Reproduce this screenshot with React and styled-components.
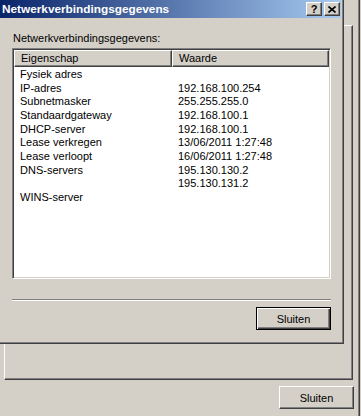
import styled, { createGlobalStyle } from 'styled-components';

const Global = createGlobalStyle`
  html, body {
    margin: 0;
    padding: 0;
    background: #d4d0c8;
    overflow: hidden;
  }
  body {
    font-family: "Liberation Sans", Arial, sans-serif;
    font-size: 11px;
    color: #000;
  }
`;

const Desktop = styled.div`
  position: relative;
  width: 361px;
  height: 416px;
  overflow: hidden;
  background: #d4d0c8;
`;

const StatusWindow = styled.div`
  box-sizing: border-box;
  width: 360px;
  height: 416px;
  padding: 25px 5px 0 4px;
  border-right: 1px solid #404040;
  box-shadow: inset -1px 0 0 #808080;
  display: flex;
  flex-direction: column;
`;

const TabPanel = styled.div`
  box-sizing: border-box;
  width: 349px;
  height: 355px;
  border-top: 1px solid #fff;
  border-left: 1px solid #fff;
  border-right: 1px solid #404040;
  border-bottom: 1px solid #404040;
  box-shadow: inset -1px -1px 0 #808080;
`;

const ButtonRow = styled.div`
  display: flex;
  justify-content: flex-end;
  margin-top: ${(p) => p.$gap}px;
`;

const Button = styled.button`
  box-sizing: border-box;
  width: 75px;
  height: 23px;
  padding: 0;
  background: #d4d0c8;
  font-family: "Liberation Sans", Arial, sans-serif;
  font-size: 11px;
  color: #000;
  border: 1px solid;
  border-color: ${(p) => (p.$default ? '#000' : '#fff #404040 #404040 #fff')};
  box-shadow: ${(p) =>
    p.$default
      ? 'inset 1px 1px 0 #fff, inset -1px -1px 0 #404040, inset -2px -2px 0 #808080'
      : 'inset -1px -1px 0 #808080'};
  outline: none;
`;

const Dialog = styled.div`
  position: absolute;
  left: 0;
  top: 0;
  box-sizing: border-box;
  width: 344px;
  height: 344px;
  background: #d4d0c8;
  border-right: 1px solid #404040;
  border-bottom: 1px solid #404040;
  box-shadow: inset -1px -1px 0 #808080;
  display: flex;
  flex-direction: column;
`;

const TitleBar = styled.div`
  box-sizing: border-box;
  width: 341px;
  height: 18px;
  padding: 0 1px 0 2px;
  display: flex;
  align-items: center;
  background: linear-gradient(to right, #0a246a, #a6caf0);
`;

const Title = styled.span`
  flex: 1;
  color: #fff;
  font-weight: bold;
  font-size: 11.8px;
  white-space: nowrap;
`;

const CaptionButton = styled.div`
  box-sizing: border-box;
  width: 16px;
  height: 14px;
  margin-left: ${(p) => p.$gap}px;
  background: #d4d0c8;
  border: 1px solid;
  border-color: #fff #404040 #404040 #fff;
  box-shadow: inset -1px -1px 0 #808080;
  display: flex;
  align-items: center;
  justify-content: center;
  font-weight: bold;
  font-size: 11px;
  line-height: 1;
`;

const Body = styled.div`
  padding: 14px 0 0 12px;
  display: flex;
  flex-direction: column;
`;

const Label = styled.div`
  padding-left: 1px;
  height: 16px;
  line-height: 13px;
`;

const ListView = styled.div`
  box-sizing: border-box;
  width: 319px;
  height: 231px;
  background: #fff;
  border: 1px solid;
  border-color: #808080 #fff #fff #808080;
  box-shadow: inset 1px 1px 0 #404040, inset -1px -1px 0 #d4d0c8;
  padding: 1px;
  display: flex;
  flex-direction: column;
`;

const Header = styled.div`
  display: flex;
  height: 17px;
`;

const HeaderCell = styled.div`
  box-sizing: border-box;
  width: ${(p) => (p.$width ? `${p.$width}px` : 'auto')};
  flex: ${(p) => (p.$width ? 'none' : '1')};
  background: #d4d0c8;
  border-top: 1px solid #fff;
  border-left: 1px solid #fff;
  border-right: 1px solid #404040;
  border-bottom: 1px solid #404040;
  box-shadow: inset -1px -1px 0 #808080;
  padding-left: 6px;
  line-height: 14px;
  white-space: nowrap;
`;

const Rows = styled.div`
  padding-top: 1px;
`;

const Row = styled.div`
  display: flex;
  height: 13.67px;
  line-height: 13.67px;
`;

const Cell = styled.div`
  box-sizing: border-box;
  width: ${(p) => (p.$width ? `${p.$width}px` : 'auto')};
  flex: ${(p) => (p.$width ? 'none' : '1')};
  padding-left: 6px;
  white-space: nowrap;
`;

const Separator = styled.div`
  width: 319px;
  height: 1px;
  margin-top: 20px;
  background: #808080;
  border-bottom: 1px solid #fff;
`;

const DialogFooter = styled.div`
  width: 319px;
  display: flex;
  justify-content: flex-end;
  margin-top: 6px;
`;

const rows = [
  ['Fysiek adres', ''],
  ['IP-adres', '192.168.100.254'],
  ['Subnetmasker', '255.255.255.0'],
  ['Standaardgateway', '192.168.100.1'],
  ['DHCP-server', '192.168.100.1'],
  ['Lease verkregen', '13/06/2011 1:27:48'],
  ['Lease verloopt', '16/06/2011 1:27:48'],
  ['DNS-servers', '195.130.130.2'],
  ['', '195.130.131.2'],
  ['WINS-server', ''],
];

function CloseGlyph() {
  return (
    <svg width="8" height="7" viewBox="0 0 8 7">
      <path d="M0.5 0.5 L7.5 6.5 M7.5 0.5 L0.5 6.5" stroke="#000" strokeWidth="1.6" />
    </svg>
  );
}

export default function App() {
  return (
    <Desktop>
      <Global />
      <StatusWindow>
        <TabPanel />
        <ButtonRow $gap={6}>
          <Button>Sluiten</Button>
        </ButtonRow>
      </StatusWindow>
      <Dialog>
        <TitleBar>
          <Title>Netwerkverbindingsgegevens</Title>
          <CaptionButton $gap={0}>?</CaptionButton>
          <CaptionButton $gap={2}>
            <CloseGlyph />
          </CaptionButton>
        </TitleBar>
        <Body>
          <Label>Netwerkverbindingsgegevens:</Label>
          <ListView>
            <Header>
              <HeaderCell $width={158}>Eigenschap</HeaderCell>
              <HeaderCell>Waarde</HeaderCell>
            </Header>
            <Rows>
              {rows.map(([name, value], i) => (
                <Row key={i}>
                  <Cell $width={158}>{name}</Cell>
                  <Cell>{value}</Cell>
                </Row>
              ))}
            </Rows>
          </ListView>
          <Separator />
          <DialogFooter>
            <Button $default>Sluiten</Button>
          </DialogFooter>
        </Body>
      </Dialog>
    </Desktop>
  );
}
